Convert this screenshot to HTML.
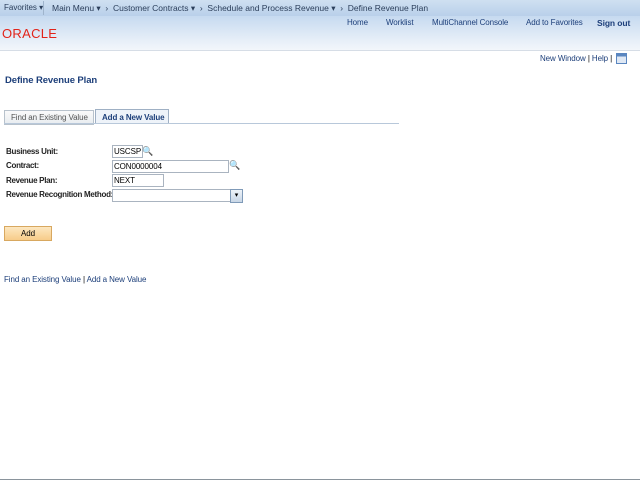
<!DOCTYPE html>
<html><head><style>
body{margin:0;width:640px;height:480px;background:#fff;font-family:"Liberation Sans",sans-serif;font-size:8px;position:relative;overflow:hidden;color:#000;letter-spacing:-0.1px}
.a{position:absolute;white-space:nowrap}
#nav{position:absolute;left:0;top:0;width:640px;height:16px;background:linear-gradient(#cfe0f1,#b9d0ea);color:#2b3e5a;font-size:8.5px;letter-spacing:0}
#hdr{position:absolute;left:0;top:16px;width:640px;height:34px;background:linear-gradient(#c6daf0,#e6eef8 70%,#f2f6fb)}
.lnk{color:#1d3f7a}
.lbl{font-weight:bold;font-size:8px;color:#222;letter-spacing:-0.3px}
.inp{position:absolute;height:11px;border:1px solid #aab4c0;background:#fff;font-size:8px;line-height:11px;padding-left:1px;box-sizing:content-box}
</style></head><body>
<div id="nav">
<span class="a" style="left:4px;top:3px;font-size:8px">Favorites ▾</span>
<div class="a" style="left:43px;top:1px;width:1px;height:14px;background:#9fb4cc"></div>
<span class="a" style="left:52px;top:3px">Main Menu ▾ &nbsp;›&nbsp; Customer Contracts ▾ &nbsp;›&nbsp; Schedule and Process Revenue ▾ &nbsp;›&nbsp; Define Revenue Plan</span>
</div>
<div id="hdr">
<span class="a lnk" style="left:347px;top:2px">Home</span>
<span class="a lnk" style="left:386px;top:2px">Worklist</span>
<span class="a lnk" style="left:432px;top:2px">MultiChannel Console</span>
<span class="a lnk" style="left:526px;top:2px">Add to Favorites</span>
<span class="a lnk" style="left:597px;top:2px;font-size:8.5px;font-weight:bold">Sign out</span>
<span class="a" style="left:2px;top:10px;font-size:13px;color:#e2231a;letter-spacing:0.3px">ORACLE</span>
</div>
<div class="a" style="left:0;top:50px;width:640px;height:1px;background:#d6dde6"></div>
<span class="a lnk" style="left:540px;top:54px">New Window <span style="color:#000">|</span> Help <span style="color:#000">|</span></span>
<div class="a" style="left:616px;top:53px;width:9px;height:9px;border:1px solid #5a86c0;background:linear-gradient(#5a86c0 30%,#dfe8f4 30%)"></div>
<span class="a" style="left:5px;top:75px;font-size:9.5px;font-weight:bold;color:#1d3f7a">Define Revenue Plan</span>
<div class="a" style="left:4px;top:110px;width:88px;height:13px;border:1px solid #b8c2cc;background:linear-gradient(#fafafa,#e8ecf0)"></div>
<span class="a" style="left:11px;top:113px;color:#555">Find an Existing Value</span>
<div class="a" style="left:95px;top:109px;width:72px;height:14px;border:1px solid #9fb0c4;border-bottom:none;background:#eef3f9"></div>
<span class="a" style="left:102px;top:113px;font-weight:bold;color:#1d3f7a">Add a New Value</span>
<div class="a" style="left:4px;top:123px;width:395px;height:1px;background:#b8c8da"></div>
<span class="a lbl" style="left:6px;top:147px">Business Unit:</span>
<span class="a lbl" style="left:6px;top:161px">Contract:</span>
<span class="a lbl" style="left:6px;top:176px">Revenue Plan:</span>
<span class="a lbl" style="left:6px;top:190px">Revenue Recognition Method:</span>
<div class="inp" style="left:112px;top:145px;width:28px">USCSP</div>
<div class="a" style="left:142px;top:146px;color:#3a6fb0;font-size:9px">🔍</div>
<div class="inp" style="left:112px;top:160px;width:114px">CON0000004</div>
<div class="a" style="left:229px;top:160px;color:#3a6fb0;font-size:9px">🔍</div>
<div class="inp" style="left:112px;top:174px;width:49px">NEXT</div>
<div class="inp" style="left:112px;top:189px;width:117px"></div>
<div class="a" style="left:230px;top:189px;width:11px;height:12px;background:linear-gradient(#eef3f9,#c8d6e6);border:1px solid #7f9ab8;text-align:center;font-size:7px;line-height:12px">▾</div>
<div class="a" style="left:4px;top:226px;width:46px;height:13px;border:1px solid #d8a860;background:linear-gradient(#fde7c0,#f7cc8a);text-align:center;line-height:13px">Add</div>
<span class="a lnk" style="left:4px;top:275px">Find an Existing Value <span style="color:#000">|</span> Add a New Value</span>
<div class="a" style="left:0;top:479px;width:640px;height:1px;background:#8a949c"></div>
</body></html>
